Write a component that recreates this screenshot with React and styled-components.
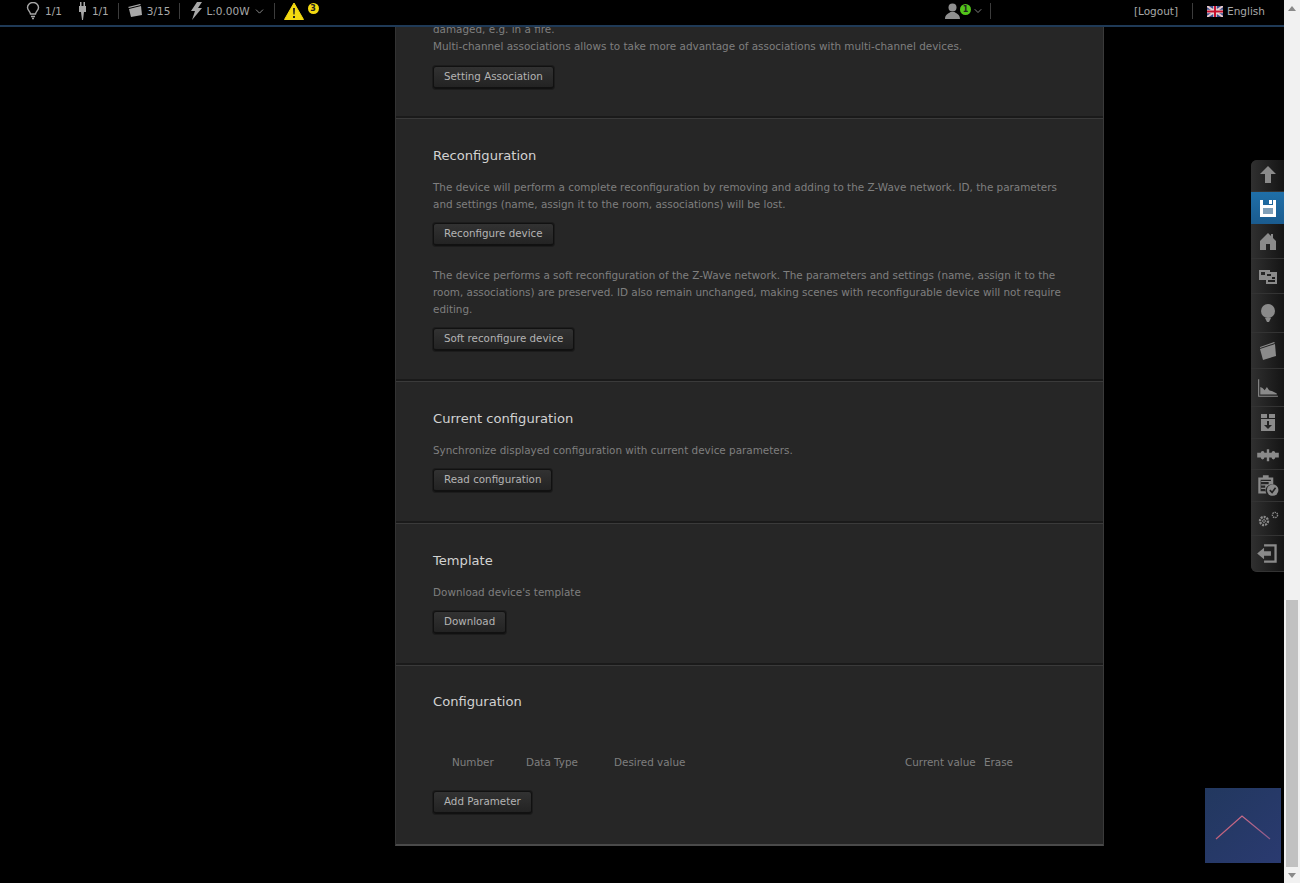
import React from "react";
import styled, { createGlobalStyle } from "styled-components";
import { ChevronDown } from "lucide-react";

const Global = createGlobalStyle`
  html, body { margin: 0; padding: 0; height: 100%; overflow: hidden; background: #000; }
  body { font-family: "DejaVu Sans", "Open Sans", sans-serif; }
  * { box-sizing: border-box; }
`;

const Page = styled.div`
  display: grid;
  grid-template-columns: 1284px 16px;
  width: 1300px;
  height: 883px;
  overflow: hidden;
`;
const Viewport = styled.main`
  position: relative;
  height: 883px;
  overflow: hidden;
  background: #000;
  padding: 21px 180px 0 395px;
`;
const TopBar = styled.header`
  position: absolute;
  inset: 0 0 auto 0;
  z-index: 5;
  height: 27px;
  display: flex;
  align-items: center;
  background: #000;
  border-bottom: 2px solid #1f3a57;
  color: #a8a8a8;
  font-size: 10.5px;
  padding: 0 19px 3px 26px;
`;
const Stat = styled.span`
  display: inline-flex;
  align-items: center;
  gap: ${p => p.$gap ?? 5}px;
  padding-right: ${p => p.$pr ?? 9}px;
  margin-right: ${p => p.$mr ?? 9}px;
  height: 16px;
  border-right: ${p => (p.$sep ? "1px solid #3c3c3c" : "0")};
`;
const Spacer = styled.span`
  flex: 1;
`;
const Badge = styled.span`
  width: 11px;
  height: 11px;
  border-radius: 50%;
  background: ${p => p.$bg};
  color: #222;
  font-size: 8px;
  font-weight: 700;
  line-height: 11px;
  text-align: center;
`;
const AlertBadge = styled(Badge)`
  margin: -6px 0 0 4px;
`;
const UserBadge = styled(Badge)`
  margin: -4px 0 0 -2px;
`;
const Panel = styled.div`
  background: #262626;
  border: 1px solid #3a3a3a;
  border-width: 0 1px 2px 1px;
  border-bottom-color: #4a4a4a;
  border-left-color: #333;
  width: 709px;
`;
const Section = styled.section`
  padding: ${p => p.$pt ?? 28}px 37px ${p => p.$pb ?? 29}px;
  border-bottom: 2px solid #1a1a1a;
  box-shadow: 0 1px 0 #3a3a3a;
  &:last-child { border-bottom: 0; box-shadow: none; }
`;
const Title = styled.h2`
  margin: 0 0 13px;
  font-size: 13.1px;
  line-height: 20px;
  font-weight: 400;
  color: #d2d2d2;
`;
const Text = styled.p`
  margin: 0 0 ${p => p.$mb ?? 10}px;
  font-size: 10.42px;
  line-height: 17px;
  color: #7f7f7f;
`;
const Btn = styled.button`
  display: block;
  height: 23px;
  padding: 0 10px 2px;
  margin-bottom: ${p => p.$mb ?? 0}px;
  font: 10.3px "DejaVu Sans", sans-serif;
  color: #b4b4b4;
  background: linear-gradient(#323232, #232323);
  border: 1px solid #111;
  border-bottom-width: 2px;
  border-radius: 3px;
  box-shadow: 0 0 0 1px #1c1c1c;
`;
const ParamHead = styled.div`
  display: grid;
  grid-template-columns: 74px 88px 291px 79px auto;
  padding: 29px 0 0 19px;
  margin-bottom: 20px;
  font-size: 10.4px;
  line-height: 17px;
  color: #7f7f7f;
`;
const SideNav = styled.nav`
  position: absolute;
  right: 0;
  top: 160px;
  width: 33px;
  display: flex;
  flex-direction: column;
  background: #222;
  border-radius: 6px 0 0 6px;
  overflow: hidden;
`;
const NavItem = styled.a`
  height: ${p => p.$h}px;
  display: flex;
  align-items: center;
  justify-content: center;
  background: ${p => (p.$active ? "linear-gradient(#1f6fa8, #1a5b8e)" : "linear-gradient(90deg, #303030, #141414)")};
  border-bottom: ${p => (p.$active ? "0" : "1px solid #333")};
  color: ${p => (p.$active ? "#fff" : "#8a8a8a")};
  &:first-child { padding-bottom: 4px; }
`;
const ScrollTop = styled.button`
  position: absolute;
  right: 3px;
  bottom: 20px;
  width: 76px;
  height: 75px;
  padding: 0;
  border: 0;
  background: linear-gradient(135deg, #22385f, #2a3a70);
  display: flex;
  align-items: center;
  justify-content: center;
`;
const Scrollbar = styled.aside`
  background: #f1f1f1;
  display: flex;
  flex-direction: column;
  height: 883px;
`;
const Arrow = styled.div`
  height: 16px;
  display: flex;
  align-items: center;
  justify-content: center;
`;
const Track = styled.div`
  flex: 1;
  padding: 584px 2px 0;
  display: flex;
`;
const Thumb = styled.div`
  width: 100%;
  background: #c1c1c1;
`;

const Tri = ({ d }) => (
  <svg width="8" height="5" viewBox="0 0 8 5"><path d={d} fill="#8a8a8a" /></svg>
);

const Icon = ({ size = 20, children, vb = "0 0 20 20" }) => (
  <svg width={size} height={size} viewBox={vb} fill="currentColor">{children}</svg>
);

const nav = [
  [32, <Icon><path d="M10 2 L18 10 H13 V19 H7 V10 H2 Z" /></Icon>],
  [32, <Icon><path fillRule="evenodd" d="M2 2 H5 V7 H15 V2 H18 V19 H2 Z M11 2 H14 V6 H11 Z M5 10 V16 H15 V10 Z" /><rect x="5" y="10" width="10" height="6" fill="#7f9fb8" /></Icon>, true],
  [35, <Icon><path d="M10 2 L13 5 V3 H15 V7 L18 10 V19 H12 V13 H8 V19 H2 V10 Z" /></Icon>],
  [35, <Icon><path fillRule="evenodd" d="M1 4 H12 V6 H19 V18 H8 V14 H1 Z M3 6 V9 H7 V6 Z M9 8 V10 H13 V8 Z M14 11 V13 H17 V11 Z M10 14 V16 H17 V14 Z" /></Icon>],
  [39, <Icon><circle cx="10" cy="8" r="7" /><path d="M7 15 H13 L11 19 H9 Z" /></Icon>],
  [36, <Icon><path d="M2 8 L17 3 L18 15 L5 19 Z" /><path d="M2 6 L16 1 L17 2 L2 7 Z" /></Icon>],
  [38, <Icon size={22}><path d="M1 2 H2 V17 H19 V18 H1 Z" /><path d="M3 16 V9 L5 10 L7 12 L9 9 L11 12 L14 13 L18 15 V16 Z" /></Icon>],
  [32, <Icon><path fillRule="evenodd" d="M3 1 H17 V18 H3 Z M9 8 V12 H6 L10 16 L14 12 H11 V8 Z M3 5 H17 V6 H3 Z M9 1 H11 V5 H9 Z" /></Icon>],
  [31, <Icon size={24}><path d="M1 9 H4 A1.5 1.5 0 0 1 7 9 H9 V6 H11 V9 H13 A1.5 1.5 0 0 1 16 9 H19 V13 H16 A1.5 1.5 0 0 1 13 13 H11 V16 H9 V13 H7 A1.5 1.5 0 0 1 4 13 H1 Z" /></Icon>],
  [32, <Icon size={23}><path fillRule="evenodd" d="M2 3 H6 V1 H11 V3 H15 V9 A5.5 5.5 0 0 0 9 17 H2 Z M4 5 V15 H8 V13 H4.5 V12 H8 V10 H4.5 V9 H11 V7 H4.5 V6 H13 V5 Z" /><circle cx="14.5" cy="14" r="5" /><path d="M12 14 L14 16 L17 12" stroke="#222" strokeWidth="1.4" fill="none" /></Icon>],
  [34, <svg width="24" height="18" viewBox="0 0 24 18" fill="none" stroke="currentColor"><circle cx="8" cy="11" r="4" strokeWidth="2.4" strokeDasharray="2 1" /><circle cx="8" cy="11" r="1.4" /><circle cx="19" cy="5" r="2.6" strokeWidth="1.4" strokeDasharray="1.5 .8" /></svg>],
  [36, <Icon size={23}><path d="M7 2 H18 V18 H7 V16 H16 V4 H7 Z" /><path d="M1 10 L7 5 V8 H13 V12 H7 V15 Z" /></Icon>],
];

export default function App() {
  return (
    <Page>
      <Global />
      <Viewport>
        <TopBar>
          <Stat $gap={5} $mr={0} $pr={16}>
            <svg width="14" height="18" viewBox="0 0 14 18" fill="none" stroke="#a8a8a8" strokeWidth="1.4"><path d="M4.5 12 C4 9 1.5 8.5 1.5 5.5 A5.5 5 0 0 1 12.5 5.5 C12.5 8.5 10 9 9.5 12 Z" /><path d="M5 14.5 H9 M6 16.5 H8" /></svg>
            1/1
          </Stat>
          <Stat $gap={5} $pr={9} $mr={9} $sep>
            <svg width="9" height="18" viewBox="0 0 9 18" fill="#a8a8a8"><path d="M2 0 H3.5 V4 H5.5 V0 H7 V4 H8 V10 H6 L5 18 H4 L3 10 H1 V4 H2 Z" /></svg>
            1/1
          </Stat>
          <Stat $gap={4} $pr={9} $mr={9} $sep>
            <svg width="15" height="14" viewBox="0 0 15 14" fill="#a8a8a8"><path d="M1 5 L13 2 L14 11 L3 13 Z" /><path d="M0 3 L12 0 L13 1 L1 4 Z" /></svg>
            3/15
          </Stat>
          <Stat $gap={3} $pr={8} $mr={9} $sep>
            <svg width="14" height="18" viewBox="0 0 14 18" fill="#a8a8a8"><path d="M8 0 H13 L9 6 H13 L3 18 L6 9 H2 Z" /></svg>
            L:0.00W
            <ChevronDown size={13} strokeWidth={1.5} />
          </Stat>
          <svg width="20" height="18" viewBox="0 0 20 18"><path d="M10 1 L19.5 17.5 H0.5 Z" fill="#f3d911" stroke="#f3d911" strokeLinejoin="round" /><path d="M9 6 H11 L10.6 12.5 H9.4 Z M9 14 H11 V16 H9 Z" fill="#222" /></svg>
          <AlertBadge $bg="#f3d911">3</AlertBadge>
          <Spacer />
          <Stat $gap={1} $pr={6} $mr={143} $sep>
            <svg width="17" height="16" viewBox="0 0 17 16" fill="#8f8f8f"><circle cx="8.5" cy="4.5" r="4" /><path d="M1 16 C1 11 5 10.5 6.5 9 H10.5 C12 10.5 16 11 16 16 Z" /></svg>
            <UserBadge $bg="#52c41a">1</UserBadge>
            <ChevronDown size={12} strokeWidth={1.5} />
          </Stat>
          <Stat $gap={0} $pr={14} $mr={14} $sep>[Logout]</Stat>
          <Stat $gap={4} $pr={0} $mr={0}>
            <svg width="16" height="11" viewBox="0 0 16 11">
              <rect width="16" height="11" fill="#3a4a8a" />
              <path d="M0 0 L16 11 M16 0 L0 11" stroke="#e8c8c8" strokeWidth="2" />
              <path d="M8 0 V11 M0 5.5 H16" stroke="#e8e0e0" strokeWidth="3.5" />
              <path d="M8 0 V11 M0 5.5 H16" stroke="#c8102e" strokeWidth="2" />
            </svg>
            English
          </Stat>
        </TopBar>

        <Panel>
          <Section $pt={0} $pb={27}>
            <Text $mb={11}>
              damaged, e.g. in a fire.<br />
              Multi-channel associations allows to take more advantage of associations with multi-channel devices.
            </Text>
            <Btn>Setting Association</Btn>
          </Section>
          <Section $pb={28}>
            <Title>Reconfiguration</Title>
            <Text>The device will perform a complete reconfiguration by removing and adding to the Z-Wave network. ID, the parameters and settings (name, assign it to the room, associations) will be lost.</Text>
            <Btn $mb={21}>Reconfigure device</Btn>
            <Text>The device performs a soft reconfiguration of the Z-Wave network. The parameters and settings (name, assign it to the room, associations) are preserved. ID also remain unchanged, making scenes with reconfigurable device will not require editing.</Text>
            <Btn>Soft reconfigure device</Btn>
          </Section>
          <Section>
            <Title>Current configuration</Title>
            <Text>Synchronize displayed configuration with current device parameters.</Text>
            <Btn>Read configuration</Btn>
          </Section>
          <Section>
            <Title>Template</Title>
            <Text>Download device's template</Text>
            <Btn>Download</Btn>
          </Section>
          <Section $pt={27} $pb={30}>
            <Title>Configuration</Title>
            <ParamHead>
              <span>Number</span>
              <span>Data Type</span>
              <span>Desired value</span>
              <span>Current value</span>
              <span>Erase</span>
            </ParamHead>
            <Btn>Add Parameter</Btn>
          </Section>
        </Panel>

        <SideNav>
          {nav.map(([h, icon, active], i) => (
            <NavItem key={i} $h={h} $active={active}>{icon}</NavItem>
          ))}
        </SideNav>
        <ScrollTop aria-label="Back to top">
          <svg width="76" height="75" viewBox="0 0 76 75" fill="none">
            <defs>
              <linearGradient id="chev" x1="0" y1="1" x2="1" y2="1">
                <stop offset="0" stopColor="#c0607a" />
                <stop offset="0.5" stopColor="#c86a88" />
                <stop offset="1" stopColor="#8a5a8a" />
              </linearGradient>
            </defs>
            <path d="M11 51 L37 28 L65 51" stroke="url(#chev)" strokeWidth="1.2" />
          </svg>
        </ScrollTop>
      </Viewport>
      <Scrollbar>
        <Arrow><Tri d="M4 0 L8 5 H0 Z" /></Arrow>
        <Track><Thumb /></Track>
        <Arrow><Tri d="M0 0 H8 L4 5 Z" /></Arrow>
      </Scrollbar>
    </Page>
  );
}
